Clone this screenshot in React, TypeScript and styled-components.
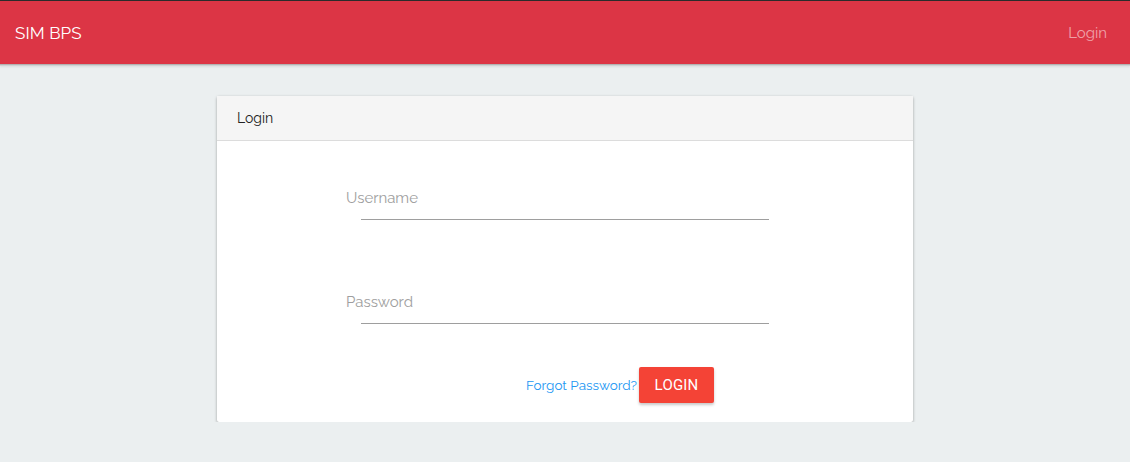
import React from "react";
import styled, { createGlobalStyle } from "styled-components";

const Global = createGlobalStyle`
  html, body { margin: 0; padding: 0; }
  body {
    background: #ebeff0;
    font-family: Raleway, Lato, "Open Sans", sans-serif;
    color: #333;
  }
`;

const Nav = styled.nav`
  height: 64px;
  box-sizing: border-box;
  border-top: 1px solid #2b2b2b;
  background: #dc3545;
  display: flex;
  align-items: center;
  justify-content: space-between;
  padding: 0 23px 0 15px;
  box-shadow: 0 1px 0 #b3b3b3, 0 2px 0 #cfd2d3, 0 3px 2px rgba(0,0,0,0.08);
  position: relative;
`;

const Brand = styled.div`
  color: #fff;
  font-size: 17px;
  letter-spacing: 0.1px;
`;

const NavLink = styled.a`
  color: rgba(255,255,255,0.55);
  font-size: 15px;
`;

const Main = styled.main`
  padding-top: 32px;
  display: flex;
  justify-content: center;
`;

const Card = styled.section`
  width: 696px;
  background: #fff;
  box-shadow: 0 1px 3px rgba(0,0,0,0.35);
  border-radius: 2px;
`;

const CardHeader = styled.header`
  height: 45px;
  box-sizing: border-box;
  background: #f5f5f5;
  border-bottom: 1px solid #dcdcdc;
  padding: 0 20px;
  display: flex;
  align-items: center;
  font-size: 14px;
  color: #222;
`;

const CardBody = styled.form`
  padding: 47px 0 19px 129px;
  display: flex;
  flex-direction: column;
`;

const Field = styled.div<{ gap: number }>`
  display: flex;
  flex-direction: column;
  margin-bottom: ${(p) => p.gap}px;
`;

const Label = styled.label`
  font-size: 15px;
  color: #9e9e9e;
  line-height: 20px;
`;

const Underline = styled.div`
  margin-top: 11px;
  margin-left: 15px;
  width: 408px;
  border-bottom: 1px solid #9e9e9e;
`;

const Actions = styled.div`
  display: flex;
  align-items: center;
  padding-left: 180px;
  gap: 2px;
`;

const Forgot = styled.a`
  color: #2196f3;
  font-size: 13.5px;
`;

const Button = styled.button`
  background: #f44336;
  color: #fff;
  border: none;
  border-radius: 2px;
  height: 36px;
  width: 75px;
  font-family: Roboto, sans-serif;
  font-size: 15px;
  font-weight: 400;
  letter-spacing: 0.2px;
  box-shadow: 0 2px 3px rgba(0,0,0,0.22);
`;

export default function App() {
  return (
    <>
      <Global />
      <Nav>
        <Brand>SIM BPS</Brand>
        <NavLink>Login</NavLink>
      </Nav>
      <Main>
        <Card>
          <CardHeader>Login</CardHeader>
          <CardBody>
            <Field gap={72}>
              <Label>Username</Label>
              <Underline />
            </Field>
            <Field gap={43}>
              <Label>Password</Label>
              <Underline />
            </Field>
            <Actions>
              <Forgot>Forgot Password?</Forgot>
              <Button type="button">LOGIN</Button>
            </Actions>
          </CardBody>
        </Card>
      </Main>
    </>
  );
}
